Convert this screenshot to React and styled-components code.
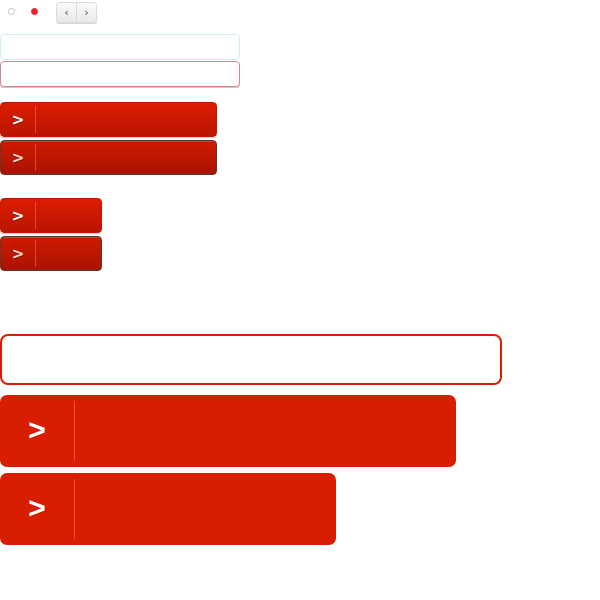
import styled, { createGlobalStyle } from 'styled-components';

const Global = createGlobalStyle`
  html, body { margin: 0; padding: 0; background: #fff; }
  body { font-family: "Liberation Sans", Arial, sans-serif; }
`

const Page = styled.div`
  display: flex;
  flex-direction: column;
  width: 600px;
  height: 600px;
`

const TopRow = styled.div`
  display: flex;
  align-items: center;
  height: 22px;
`

const Dot = styled.span`
  box-sizing: border-box;
  width: 7px;
  height: 7px;
  border-radius: 50%;
  margin-left: ${(p) => p.left}px;
  background: ${(p) => (p.on ? '#e8202a' : '#fff')};
  border: 1px solid ${(p) => (p.on ? '#e8202a' : '#c4c4c4')};
`

const Pager = styled.div`
  display: flex;
  margin-left: 18px;
  margin-top: 2px;
  height: 19px;
  border-radius: 3px;
  background: linear-gradient(#fafafa, #e9e9e9);
  border: 1px solid #dcdcdc;
  box-shadow: 0 1px 1px rgba(0,0,0,0.18);
`

const PagerBtn = styled.span`
  width: 19px;
  display: flex;
  align-items: center;
  justify-content: center;
  font-family: "DejaVu Sans", sans-serif;
  font-size: 11px;
  font-weight: bold;
  color: #777;
  & + & { border-left: 1px solid #dadada; }
`

const Field = styled.div`
  box-sizing: border-box;
  width: ${(p) => p.w}px;
  height: ${(p) => p.h}px;
  margin-top: ${(p) => p.top}px;
  border: ${(p) => p.bw || 1}px solid ${(p) => p.color};
  border-radius: ${(p) => p.r || 4}px;
  box-shadow: ${(p) => p.shadow || 'none'};
  background: #fff;
`

const Btn = styled.div`
  box-sizing: border-box;
  display: flex;
  width: ${(p) => p.w}px;
  height: 35px;
  margin-top: ${(p) => p.top}px;
  border-radius: 4px;
  background: ${(p) => (p.pressed
    ? 'linear-gradient(#cf1a00, #a91300)'
    : 'linear-gradient(#dd1c00, #b91500)')};
  border: 1px solid ${(p) => (p.pressed ? '#5a3a34' : '#c51800')};
  box-shadow: ${(p) => (p.pressed ? 'inset 0 1px 0 rgba(255,255,255,0.15)' : '0 1px 1px rgba(0,0,0,0.2)')};
`

const BtnIcon = styled.span`
  width: 34px;
  display: flex;
  align-items: center;
  justify-content: center;
  border-right: 1px solid rgba(255,140,120,0.45);
  margin: 3px 0;
  font-family: "DejaVu Sans", sans-serif;
  font-size: 15px;
  font-weight: bold;
  color: ${(p) => (p.pressed ? '#f4d6cf' : '#fff')};
  text-shadow: 0 1px 0 rgba(0,0,0,0.3);
`

const BigBtn = styled.div`
  display: flex;
  width: ${(p) => p.w}px;
  height: 72px;
  margin-top: ${(p) => p.top}px;
  border-radius: 7px;
  background: #d81e00;
`

const BigIcon = styled.span`
  width: 74px;
  display: flex;
  align-items: center;
  justify-content: center;
  color: #fff;
  font-size: 30px;
  font-weight: bold;
  border-right: 1px solid #e8553e;
  margin: 6px 0;
  padding-bottom: 2px;
`

export default function App() {
  return (
    <>
      <Global />
      <Page>
        <TopRow>
          <Dot left={8} />
          <Dot left={16} on />
          <Pager>
            <PagerBtn>&lsaquo;</PagerBtn>
            <PagerBtn>&rsaquo;</PagerBtn>
          </Pager>
        </TopRow>
        <Field w={240} h={26} top={12} color="#cdeef2" />
        <Field w={240} h={26} top={1} color="#d9868a" shadow="0 1px 0 #c3c9cc" />
        <Btn w={217} top={15}><BtnIcon>&gt;</BtnIcon></Btn>
        <Btn w={217} top={3} pressed><BtnIcon pressed>&gt;</BtnIcon></Btn>
        <Btn w={102} top={23}><BtnIcon>&gt;</BtnIcon></Btn>
        <Btn w={102} top={3} pressed><BtnIcon pressed>&gt;</BtnIcon></Btn>
        <Field w={502} h={51} top={63} color="#d91e00" bw={2} r={8} />
        <BigBtn w={456} top={10}><BigIcon>&gt;</BigIcon></BigBtn>
        <BigBtn w={336} top={6}><BigIcon>&gt;</BigIcon></BigBtn>
      </Page>
    </>
  )
}
